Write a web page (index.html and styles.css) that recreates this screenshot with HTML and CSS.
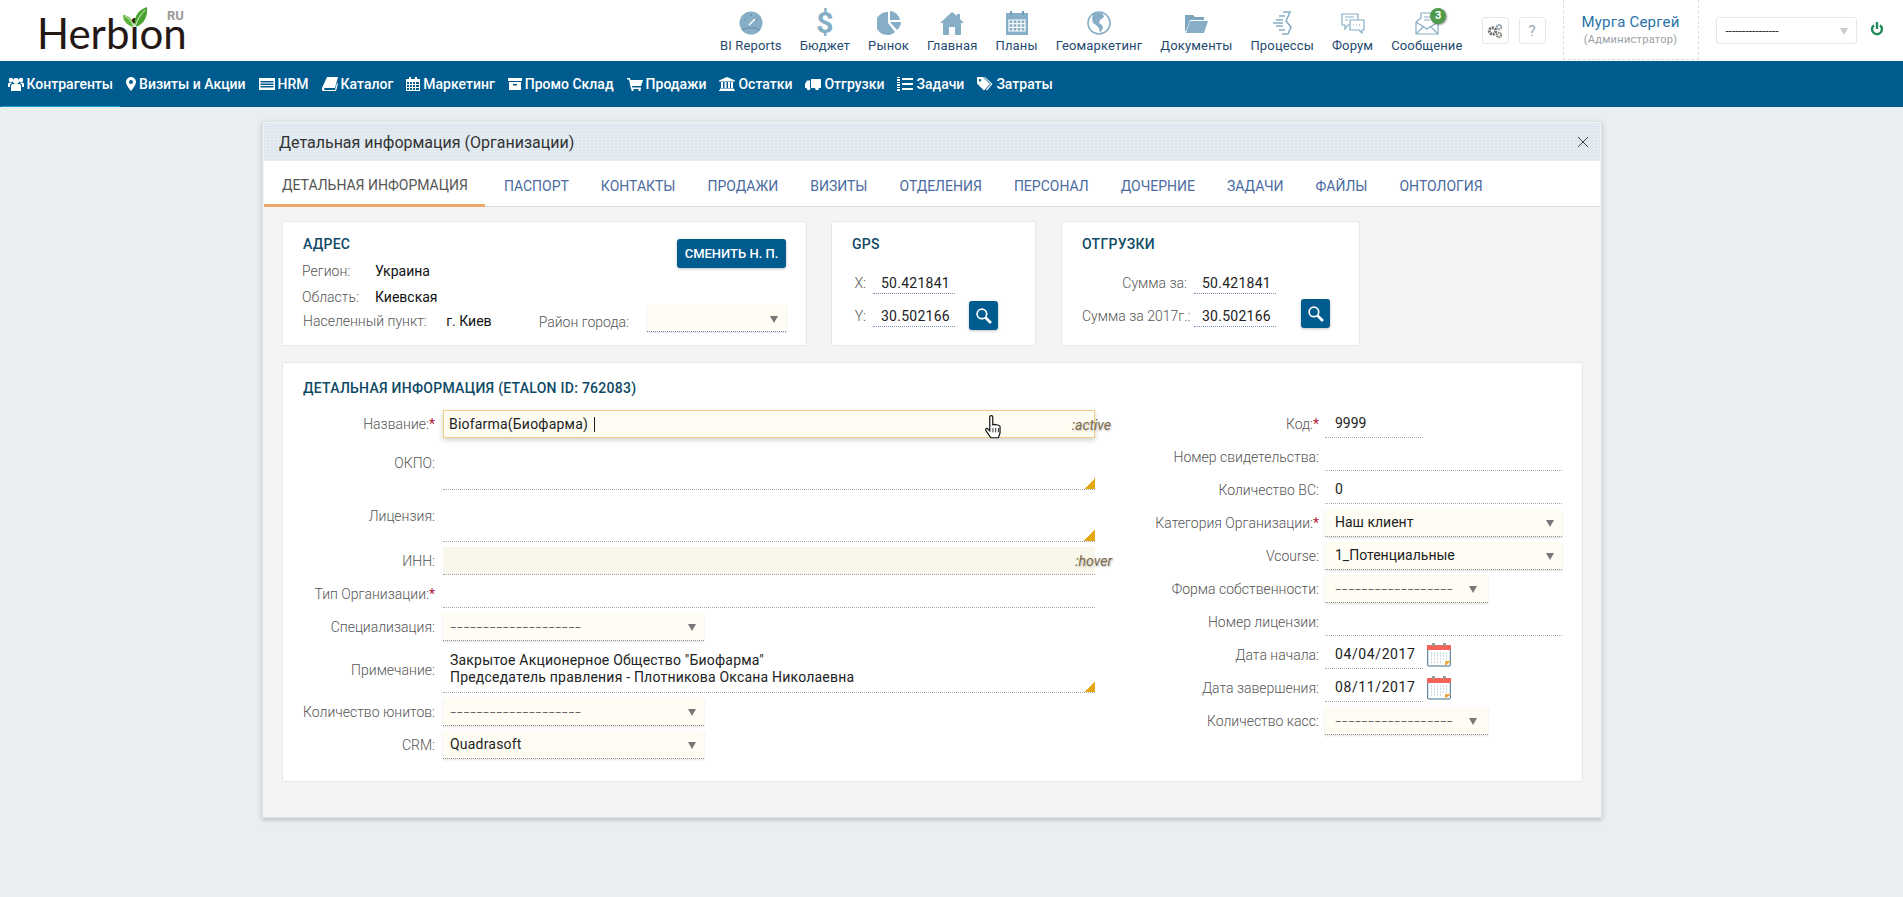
FILE: index.html
```html
<!DOCTYPE html>
<html lang="ru">
<head>
  <meta charset="UTF-8">
  <meta name="viewport" content="width=device-width, initial-scale=1.0">
  <title>Детальная информация (Организации)</title>
  <link rel="stylesheet" href="styles.css">
</head>
<body>
  <header class="topbar">
    <div class="logo">
      <span class="logo-text">Herbion</span>
      <span class="logo-ru">RU</span>
      <svg class="logo-leaf" viewBox="0 0 26 21"><path fill="#5db33c" d="M12 20C6 19 1 15 1 8c5 0 10 4 11 12z"/><path fill="#4ba32f" d="M13 20c-2-8 2-17 12-20 1 9-3 18-12 20z"/><path fill="none" stroke="#fff" stroke-width=".8" d="M13 20C15 13 18 8 23 3M12 20C10 15 7 11 3 9"/></svg>
    </div>
    <nav class="top-menu">
      <a class="top-item"><svg class="top-icon" viewBox="0 0 24 24"><circle cx="12" cy="12" r="11.5" fill="#86aec6"/><path fill="none" stroke="#5f8dab" stroke-width="1" d="M3 19c5-3 13-3 18 0M12 3v2M5 8l2 1M19 8l-2 1"/><path stroke="#fff" stroke-width="1.5" d="M10 14l6-6"/></svg>BI Reports</a>
      <a class="top-item"><span class="top-glyph">$</span>Бюджет</a>
      <a class="top-item"><svg class="top-icon" viewBox="0 0 24 24"><path fill="#86aec6" d="M11 1v11l7 9A11.5 11.5 0 1 1 11 1z"/><path fill="#86aec6" d="M13 0a11 11 0 0 1 10 9H13zM13 11h11a11 11 0 0 1-4 8z"/></svg>Рынок</a>
      <a class="top-item"><svg class="top-icon" viewBox="0 0 24 24"><path fill="#86aec6" d="M12 1L0 12h3v12h6v-8h6v8h6V12h3l-4-4V3h-3v2z"/></svg>Главная</a>
      <a class="top-item"><svg class="top-icon" viewBox="0 0 24 24"><rect x="1" y="2" width="22" height="22" fill="#86aec6"/><rect x="5" y="0" width="2" height="4" fill="#6f9ab5"/><rect x="17" y="0" width="2" height="4" fill="#6f9ab5"/><path fill="none" stroke="#fff" stroke-width="1.2" d="M4 9h16v11H4zM4 12.6h16M4 16.3h16M8 9v11M12 9v11M16 9v11"/></svg>Планы</a>
      <a class="top-item"><svg class="top-icon" viewBox="0 0 24 24"><circle cx="12" cy="12" r="11" fill="#fff" stroke="#86aec6" stroke-width="1.6"/><path fill="#86aec6" d="M6 3c3-2 8-2 10 0l1 3-4 3-1 3 3 2 1 3-3 5-1-5-3-3-3-2-1-4z"/></svg>Геомаркетинг</a>
      <a class="top-item"><svg class="top-icon" viewBox="0 0 24 24"><path fill="#7da7c1" d="M1 4h8l2 2h9v3H6L2 20H1z"/><path fill="#86aec6" d="M6 10h18l-4 12H2z"/></svg>Документы</a>
      <a class="top-item"><svg class="top-icon" viewBox="0 0 24 24"><path fill="none" stroke="#86aec6" stroke-width="1.6" d="M13 1h7l-4 9 5 6-3 7h-6M9 5h6M6 9h7M3 12h10M6 15h7M9 19h6"/></svg>Процессы</a>
      <a class="top-item"><svg class="top-icon" viewBox="0 0 24 24"><path fill="#fff" stroke="#86aec6" stroke-width="1.2" d="M1 3h16v11H7l-3 4v-4H1z"/><path fill="#fff" stroke="#86aec6" stroke-width="1.2" d="M9 9h14v10h-2v3l-3-3H9z"/><path stroke="#86aec6" d="M12 14h1M15 14h1M18 14h1M4 6h9M4 9h3"/></svg>Форум</a>
      <a class="top-item top-item-mail"><svg class="top-icon" viewBox="0 0 24 24"><path fill="#fff" stroke="#86aec6" stroke-width="1.2" d="M1 11l5-4V2h12v5l5 4v12H1z"/><path fill="none" stroke="#86aec6" stroke-width="1.2" d="M1 11l11 7 11-7M1 23l8-8M23 23l-8-8M9 6h6M9 9h6"/></svg><span class="mail-badge">3</span>Сообщение</a>
    </nav>
    <button class="tool-btn tool-gear"><svg viewBox="0 0 16 16" width="16" height="16"><circle cx="5.500" cy="8" r="3.200" fill="none" stroke="#747474" stroke-width="3" stroke-dasharray="2 .8"/><circle cx="12" cy="4" r="2.200" fill="none" stroke="#8a9aa8" stroke-width="2.200" stroke-dasharray="1.500 .6"/><circle cx="12" cy="12" r="2.200" fill="none" stroke="#8a8a7a" stroke-width="2.200" stroke-dasharray="1.500 .6"/></svg></button>
    <button class="tool-btn tool-help">?</button>
    <div class="user-box">
      <div class="user-name">Мурга Сергей</div>
      <div class="user-role">(Администратор)</div>
    </div>
    <div class="top-select">----------------<span class="arrow arrow-light"></span></div>
    <svg class="power" viewBox="0 0 14 14"><path fill="none" stroke="#1f8a5a" stroke-width="2.400" d="M4 3.200a5 5 0 1 0 6 0M7 0v7"/></svg>
  </header>

  <nav class="main-menu">
    <a class="menu-item active"><svg viewBox="0 0 16 14"><circle cx="8" cy="4" r="3"/><circle cx="3" cy="3" r="2.200"/><circle cx="13" cy="3" r="2.200"/><path d="M3 14V9a2 2 0 0 1 2-2h6a2 2 0 0 1 2 2v5zM0 10V7a1.500 1.500 0 0 1 1.500-1.500H4L2 8v2zM16 10V7a1.500 1.500 0 0 0-1.500-1.500H12L14 8v2z"/></svg>Контрагенты</a>
    <a class="menu-item"><svg viewBox="0 0 10 14"><path fill-rule="evenodd" d="M5 0a5 5 0 0 1 5 5c0 3-5 9-5 9S0 8 0 5a5 5 0 0 1 5-5zm0 3a2 2 0 1 0 0 4 2 2 0 0 0 0-4z"/></svg>Визиты и Акции</a>
    <a class="menu-item"><svg viewBox="0 0 16 14"><path fill-rule="evenodd" d="M0 1h16v12H0zM1.500 4v1.500h13V4zm0 2.500V8h13V6.500zm0 2.500v1.500h13V9z"/></svg>HRM</a>
    <a class="menu-item"><svg viewBox="0 0 16 14"><path d="M5 0h11l-3 11H3a1 1 0 0 0 0 2h10l2-7 1 1-2 7H2a2 2 0 0 1-2-3z"/></svg>Каталог</a>
    <a class="menu-item"><svg viewBox="0 0 14 14"><path fill-rule="evenodd" d="M0 2h3V0h2v2h4V0h2v2h3v12H0zM1 5v2h2V5zm3 0v2h2V5zm3 0v2h2V5zm3 0v2h3V5zM1 8v2h2V8zm3 0v2h2V8zm3 0v2h2V8zm3 0v2h3V8zM1 11v2h2v-2zm3 0v2h2v-2zm3 0v2h2v-2zm3 0v2h3v-2z"/></svg>Маркетинг</a>
    <a class="menu-item"><svg viewBox="0 0 14 14"><path fill-rule="evenodd" d="M0 1h14v3H0zM1 5h12v8H1zm4 2v1.500h4V7z"/></svg>Промо Склад</a>
    <a class="menu-item"><svg viewBox="0 0 16 14"><path d="M0 1h3l.5 2H16l-2 6H5l.3 1.500H14V12H4L2 2.500H0z"/><circle cx="5.500" cy="13" r="1.200"/><circle cx="12.500" cy="13" r="1.200"/></svg>Продажи</a>
    <a class="menu-item"><svg viewBox="0 0 16 14"><path d="M8 0l8 3.500v1H0v-1zM2 5h2v6H2zM5.500 5h2v6h-2zM9 5h2v6H9zM12 5h2v6h-2zM1 11.500h14V13H1zM0 13h16v1H0z"/></svg>Остатки</a>
    <a class="menu-item"><svg viewBox="0 0 16 14"><path d="M6 2h10v9H6zM0 7l2-3.500h3V11H0z"/><circle cx="3.500" cy="11.500" r="1.800"/><circle cx="12" cy="11.500" r="1.800"/></svg>Отгрузки</a>
    <a class="menu-item"><svg viewBox="0 0 16 14"><path d="M5 1h11v2H5zM5 6h11v2H5zM5 11h11v2H5zM0 0h3v1H0zM0 2h3v2H0zM0 5h3v1H0zM0 7h3v2H0zM0 10h3v1H0zM0 12h3v2H0z"/></svg>Задачи</a>
    <a class="menu-item"><svg viewBox="0 0 16 14"><path fill-rule="evenodd" d="M0 0h6l7 7-6 6.500-7-7zm3 2a1.200 1.200 0 1 0 0 2.400A1.200 1.200 0 0 0 3 2z"/><path d="M8 0l7.500 7-5.500 6.500-1-1L14 7 7 0z"/></svg>Затраты</a>
  </nav>

  <main class="modal">
    <div class="modal-title">
      <span>Детальная информация (Организации)</span>
      <svg class="modal-close" viewBox="0 0 12 12"><path fill="none" stroke="#444" d="M1 1l10 10M11 1L1 11"/></svg>
    </div>
    <div class="tabs">
      <a class="tab active">Детальная информация</a>
      <a class="tab">Паспорт</a>
      <a class="tab">Контакты</a>
      <a class="tab">Продажи</a>
      <a class="tab">Визиты</a>
      <a class="tab">Отделения</a>
      <a class="tab">Персонал</a>
      <a class="tab">Дочерние</a>
      <a class="tab">Задачи</a>
      <a class="tab">Файлы</a>
      <a class="tab">Онтология</a>
    </div>

    <div class="modal-body">
      <div class="card-row">
        <section class="card card-address">
          <div class="address-top">
            <div>
              <h3 class="card-title">Адрес</h3>
              <div class="info-row first"><span class="info-label">Регион:</span><span class="info-value">Украина</span></div>
              <div class="info-row"><span class="info-label">Область:</span><span class="info-value">Киевская</span></div>
            </div>
            <button class="btn">Сменить н. п.</button>
          </div>
          <div class="address-bottom">
            <span class="city-label">Населенный пункт:</span>
            <span class="city-value">г. Киев</span>
            <span class="district-label">Район города:</span>
            <div class="select district-select"><span class="arrow"></span></div>
          </div>
        </section>

        <section class="card card-gps">
          <h3 class="card-title">GPS</h3>
          <div class="coords">
            <div class="coord-rows">
              <div class="coord-row"><span class="coord-label">X:</span><span class="coord-value">50.421841</span></div>
              <div class="coord-row"><span class="coord-label">Y:</span><span class="coord-value">30.502166</span></div>
            </div>
            <button class="search-btn"><svg viewBox="0 0 16 16" width="17" height="17"><circle cx="6.500" cy="6.500" r="4.500" fill="none" stroke="#fff" stroke-width="1.600"/><path stroke="#fff" stroke-width="2.600" d="M10 10l5 5"/></svg></button>
          </div>
        </section>

        <section class="card card-ship">
          <h3 class="card-title">Отгрузки</h3>
          <div class="coords">
            <div class="coord-rows">
              <div class="coord-row"><span class="coord-label ship-label">Сумма за:</span><span class="coord-value">50.421841</span></div>
              <div class="coord-row"><span class="coord-label ship-label">Сумма за 2017г.:</span><span class="coord-value">30.502166</span></div>
            </div>
            <button class="search-btn ship-search"><svg viewBox="0 0 16 16" width="17" height="17"><circle cx="6.500" cy="6.500" r="4.500" fill="none" stroke="#fff" stroke-width="1.600"/><path stroke="#fff" stroke-width="2.600" d="M10 10l5 5"/></svg></button>
          </div>
        </section>
      </div>

      <section class="card card-details">
        <h3 class="card-title">Детальная информация (Etalon ID: 762083)</h3>
        <div class="form-cols">
          <div class="form-col form-left">
            <div class="field-row"><label>Название:<b>*</b></label>
              <div class="field field-active">Biofarma(Биофарма) <i class="caret"></i><em class="state-hint">:active</em>
                <svg class="hand" viewBox="0 0 16 24"><path fill="#fff" stroke="#111" stroke-width="1.100" d="M5 2a1.400 1.400 0 0 1 2.800 0v7l1.700-.4 1.800.4 1.700.5 1.500 1v6l-1.500 4.500H6L1.500 14.500c-1-2 .8-2.800 2-1.500L5 14.500z"/><path stroke="#111" stroke-width=".8" d="M8 12v4M10.500 12v4M13 12v4"/></svg>
              </div>
            </div>
            <div class="field-row row-tall"><label class="label-top">ОКПО:</label><div class="field note-field"></div></div>
            <div class="field-row row-tall"><label class="label-top label-low">Лицензия:</label><div class="field note-field"></div></div>
            <div class="field-row"><label>ИНН:</label><div class="field field-hover"><em class="state-hint">:hover</em></div></div>
            <div class="field-row"><label>Тип Организации:<b>*</b></label><div class="field"></div></div>
            <div class="field-row"><label>Специализация:</label><div class="select select-left"><span class="dashes">––––––––––––––––––––</span><span class="arrow"></span></div></div>
            <div class="field-row row-tall"><label>Примечание:</label><div class="field note-field note-text">Закрытое Акционерное Общество "Биофарма"<br>Председатель правления - Плотникова Оксана Николаевна</div></div>
            <div class="field-row"><label>Количество юнитов:</label><div class="select select-left"><span class="dashes">––––––––––––––––––––</span><span class="arrow"></span></div></div>
            <div class="field-row"><label>CRM:</label><div class="select select-left">Quadrasoft<span class="arrow"></span></div></div>
          </div>

          <div class="form-col form-right">
            <div class="field-row"><label>Код:<b>*</b></label><div class="field field-short">9999</div></div>
            <div class="field-row"><label>Номер свидетельства:</label><div class="field"></div></div>
            <div class="field-row"><label>Количество ВС:</label><div class="field">0</div></div>
            <div class="field-row"><label>Категория Организации:<b>*</b></label><div class="select">Наш клиент<span class="arrow"></span></div></div>
            <div class="field-row"><label>Vcourse:</label><div class="select">1_Потенциальные<span class="arrow"></span></div></div>
            <div class="field-row"><label>Форма собственности:</label><div class="select select-mid"><span class="dashes">––––––––––––––––––</span><span class="arrow"></span></div></div>
            <div class="field-row"><label>Номер лицензии:</label><div class="field"></div></div>
            <div class="field-row"><label>Дата начала:</label><div class="field field-short field-date">04/04/2017</div>
              <svg class="calendar" viewBox="0 0 24 24"><rect x=".7" y="3" width="22.600" height="20" rx="1" fill="#fff" stroke="#3d6c8c"/><rect y="2" width="24" height="5" fill="#f4635a"/><path fill="#9a9a8f" d="M5 0h3v3H5zM16 0h3v3h-3z"/><path stroke="#9bb2c2" stroke-dasharray="1 2" d="M4 10h16M4 13h16M4 16h16M4 19h12"/><path fill="#f0a63c" d="M18 23v-5h6z"/></svg>
            </div>
            <div class="field-row"><label>Дата завершения:</label><div class="field field-short field-date">08/11/2017</div>
              <svg class="calendar" viewBox="0 0 24 24"><rect x=".7" y="3" width="22.600" height="20" rx="1" fill="#fff" stroke="#3d6c8c"/><rect y="2" width="24" height="5" fill="#f4635a"/><path fill="#9a9a8f" d="M5 0h3v3H5zM16 0h3v3h-3z"/><path stroke="#9bb2c2" stroke-dasharray="1 2" d="M4 10h16M4 13h16M4 16h16M4 19h12"/><path fill="#f0a63c" d="M18 23v-5h6z"/></svg>
            </div>
            <div class="field-row"><label>Количество касс:</label><div class="select select-mid"><span class="dashes">––––––––––––––––––</span><span class="arrow"></span></div></div>
          </div>
        </div>
      </section>
    </div>
  </main>
</body>
</html>
```

FILE: styles.css
```css
* {
  box-sizing: border-box;
}
body {
  margin: 0;
  min-height: 100vh;
  background: #e9eef1;
  font-family: Roboto, "Liberation Sans", sans-serif;
  font-size: 14px;
  color: #222;
}

/* top bar */
.topbar {
  height: 61px;
  background: #fff;
  display: flex;
  align-items: flex-start;
}
.logo {
  position: relative;
  width: 702px;
  height: 61px;
  flex: none;
}
.logo-text {
  position: absolute;
  left: 37px;
  top: 19px;
  font-family: Lato, sans-serif;
  font-weight: 400;
  font-size: 42px;
  line-height: 28px;
  color: #231815;
}
.logo-ru {
  position: absolute;
  left: 167px;
  top: 12px;
  font-size: 13px;
  font-weight: 700;
  line-height: 8px;
  color: #9a9a9a;
}
.logo-leaf {
  position: absolute;
  left: 122px;
  top: 7px;
  width: 26px;
  height: 21px;
}
.top-menu {
  display: flex;
  gap: 18px;
  margin-left: 18px;
}
.top-item {
  position: relative;
  display: flex;
  flex-direction: column;
  align-items: center;
  padding-top: 11px;
  font-size: 13px;
  letter-spacing: 0.15px;
  line-height: 16px;
  color: #1f4a70;
}
.top-icon {
  width: 24px;
  height: 24px;
  margin-bottom: 3px;
}
.top-glyph {
  height: 24px;
  margin-bottom: 3px;
  font-size: 30px;
  line-height: 24px;
  font-weight: 700;
  color: #86aec6;
}
.mail-badge {
  position: absolute;
  left: 39px;
  top: 8px;
  width: 16px;
  height: 16px;
  border-radius: 50%;
  background: #4f9a4c;
  box-shadow: 1px 1px 2px rgba(0, 0, 0, 0.4);
  color: #fff;
  font-size: 11px;
  font-weight: 700;
  letter-spacing: 0;
  line-height: 16px;
  text-align: center;
}
.tool-btn {
  width: 27px;
  height: 27px;
  margin: 17px 0 0 19px;
  padding: 0;
  flex: none;
  background: #fff;
  border: 1px solid #e6e6e6;
  border-radius: 3px;
  display: flex;
  align-items: center;
  justify-content: center;
}
.tool-help {
  margin-left: 10px;
  color: #9aa5ad;
  font-family: Roboto, sans-serif;
  font-size: 15px;
}
.user-box {
  width: 136px;
  height: 60px;
  margin-left: 17px;
  flex: none;
  border: 1px dashed #dedede;
  border-top: none;
  text-align: center;
  padding-top: 13px;
}
.user-name {
  font-size: 15px;
  letter-spacing: 0.2px;
  line-height: 18px;
  color: #2a72a8;
}
.user-role {
  font-size: 11px;
  letter-spacing: 0.3px;
  line-height: 16px;
  margin-top: 1px;
  color: #9a9fa8;
}
.top-select {
  position: relative;
  width: 141px;
  height: 27px;
  margin: 17px 0 0 17px;
  flex: none;
  border: 1px solid #e6e6e6;
  border-radius: 3px;
  padding-left: 9px;
  font-size: 12px;
  line-height: 26px;
  color: #333;
}
.power {
  width: 14px;
  height: 14px;
  margin: 22px 0 0 13px;
  flex: none;
}

/* blue menu */
.main-menu {
  height: 46px;
  background: #005b8f;
  display: flex;
  padding-left: 1px;
}
.menu-item {
  display: flex;
  align-items: center;
  gap: 3px;
  height: 46px;
  padding: 0 6.5px;
  color: #fff;
  font-size: 14px;
  font-weight: 500;
}
.menu-item svg {
  height: 14px;
  width: auto;
  fill: #fff;
  flex: none;
}
.menu-item.active {
  border-bottom: 1px solid #1b9ad6;
}

/* modal */
.modal {
  width: 1340px;
  margin: 14px 0 0 262px;
  padding: 1px;
  background: #f2f4f6;
  border: 1px solid #dde2e5;
  box-shadow: 0 2px 5px rgba(0, 0, 0, 0.2);
}
.modal-title {
  height: 38px;
  padding: 0 11px 0 15px;
  display: flex;
  align-items: center;
  justify-content: space-between;
  font-size: 16px;
  color: #333;
  background-color: #dfe8ef;
  background-image: radial-gradient(rgba(255, 255, 255, 0.35) 0.6px, transparent 0.7px);
  background-size: 4px 3px;
}
.modal-close {
  width: 12px;
  height: 12px;
}
.tabs {
  height: 46px;
  background: #fff;
  border-bottom: 1px solid #dcdfe2;
  display: flex;
}
.tab {
  padding: 16px 16px 0;
  font-size: 14px;
  line-height: 18px;
  text-transform: uppercase;
  color: #4a6ba0;
}
.tab.active {
  height: 46px;
  padding: 15px 17px 0 18px;
  margin-right: 3px;
  border-bottom: 3px solid #eba868;
  color: #555;
}
.modal-body {
  padding: 14px 18px 34px;
}
.card-row {
  display: flex;
  gap: 24px;
  margin-bottom: 16px;
}
.card {
  background: #fff;
  border: 1px solid #e6e8ea;
  border-radius: 2px;
  padding: 14px 20px 15px;
}
.card-title {
  margin: 0;
  font-size: 14px;
  line-height: 16px;
  font-weight: 500;
  letter-spacing: 0.27px;
  text-transform: uppercase;
  color: #0e4a66;
}

/* address */
.card-address {
  width: 525px;
  height: 125px;
  padding-right: 20px;
}
.address-top {
  display: flex;
  justify-content: space-between;
  align-items: flex-start;
  height: 69px;
}
.info-row {
  display: flex;
  line-height: 16px;
  margin-top: 10px;
}
.info-row.first {
  margin-top: 11px;
}
.info-label {
  width: 72px;
  margin-left: -1px;
  margin-right: 1px;
  color: #555;
  font-weight: 300;
}
.info-value,
.city-value {
  color: #111;
}
.btn {
  height: 29px;
  width: 109px;
  margin-top: 3px;
  padding: 0;
  border: none;
  border-radius: 3px;
  background: #005b8f;
  box-shadow: 0 1px 3px rgba(0, 0, 0, 0.25);
  color: #fff;
  font-family: Roboto, sans-serif;
  font-size: 13px;
  font-weight: 500;
  text-transform: uppercase;
}
.address-bottom {
  display: flex;
  align-items: flex-start;
  line-height: 16px;
}
.city-label {
  width: 144px;
  margin-top: 8px;
  color: #555;
  font-weight: 300;
}
.city-value {
  width: 93px;
  margin-top: 8px;
}
.district-label {
  width: 109px;
  margin-top: 9px;
  color: #555;
  font-weight: 300;
}
.district-select {
  width: 139px;
}

/* coordinates */
.card-gps {
  width: 205px;
  height: 125px;
}
.card-ship {
  width: 299px;
  height: 125px;
  margin-left: 1px;
}
.coords {
  display: flex;
  align-items: flex-end;
  margin-top: 15px;
}
.coord-rows {
  display: flex;
  flex-direction: column;
  gap: 6px;
  margin-bottom: 3px;
}
.coord-row {
  display: flex;
  align-items: flex-start;
  gap: 7px;
}
.coord-label {
  width: 14px;
  margin-top: 8px;
  line-height: 16px;
  text-align: right;
  color: #555;
  font-weight: 300;
}
.ship-label {
  width: 105px;
  white-space: nowrap;
}
.coord-value {
  width: 82px;
  height: 27px;
  padding: 8px 0 0 8px;
  line-height: 16px;
  letter-spacing: 0.25px;
  border-bottom: 1px dotted #7a93b4;
  color: #222;
}
.search-btn {
  width: 29px;
  height: 29px;
  margin-left: 14px;
  padding: 0;
  border: none;
  border-radius: 3px;
  background: #005b8f;
  box-shadow: 0 1px 3px rgba(0, 0, 0, 0.25);
  display: flex;
  align-items: center;
  justify-content: center;
}
.ship-search {
  margin-left: 25px;
  margin-bottom: 2px;
}

/* form */
.card-details {
  padding: 17px 20px 22px 20px;
  width: 1301px;
}
.form-cols {
  display: flex;
  margin-top: 14px;
}
.form-col {
  display: flex;
  flex-direction: column;
  gap: 5px;
}
.form-left {
  width: 792px;
}
.form-right {
  width: 467px;
}
.field-row {
  display: flex;
  align-items: center;
  height: 28px;
}
.row-tall {
  height: 47px;
}
.field-row label {
  width: 132px;
  margin-right: 8px;
  flex: none;
  text-align: right;
  line-height: 16px;
  color: #555;
  font-weight: 300;
  white-space: nowrap;
}
.form-right .field-row label {
  width: 224px;
  margin-right: 6px;
}
.field-row label b {
  color: #b3223c;
  font-weight: 400;
}
.field-row .label-top {
  align-self: flex-start;
  margin-top: 12px;
}
.field-row .label-low {
  margin-top: 13px;
}
.field {
  position: relative;
  flex: 1;
  height: 100%;
  padding: 5px 10px 0;
  line-height: 16px;
  border-bottom: 1px dotted #a8a8a8;
  color: #222;
}
.form-left .field {
  padding-left: 7px;
  letter-spacing: 0.2px;
}
.field-short {
  flex: none;
  width: 98px;
}
.field-date {
  letter-spacing: 0.6px;
}
.note-field::after {
  content: "";
  position: absolute;
  right: 0;
  bottom: 0;
  width: 11px;
  height: 11px;
  background: linear-gradient(135deg, transparent 50%, #e5a812 50%);
}
.form-left .note-text {
  line-height: 17px;
  padding-top: 6px;
}
.field-active {
  background: #fffdf3;
  border: 1px solid #f0d184;
  box-shadow: 0 2px 5px rgba(0, 0, 0, 0.2);
}
.form-left .field-active {
  padding-left: 5px;
}
.field-hover {
  background: #f9f6ec;
}
.caret {
  display: inline-block;
  width: 1px;
  height: 15px;
  margin-left: 2px;
  vertical-align: -3px;
  background: #222;
}
.state-hint {
  position: absolute;
  right: -17px;
  top: 6px;
  font-size: 14px;
  color: #7a6a4a;
  letter-spacing: 0;
  text-shadow: 1px 1px 2px rgba(0, 0, 0, 0.25);
}
.hand {
  position: absolute;
  left: 540px;
  top: 4px;
  width: 18px;
  height: 26px;
}
.select {
  position: relative;
  flex: 1;
  height: 100%;
  padding: 5px 10px 0;
  line-height: 16px;
  background: #fffdf3;
  border-bottom: 1px dotted #8f8f8f;
  box-shadow: 0 1px 2px rgba(0, 0, 0, 0.12);
  color: #222;
}
.select-left {
  flex: none;
  width: 261px;
  padding-left: 7px;
  letter-spacing: 0.2px;
}
.select-mid {
  flex: none;
  width: 163px;
}
.dashes {
  font-size: 10px;
  letter-spacing: 0;
  color: #555;
}
.district-select {
  flex: none;
  height: 27px;
  border-bottom-color: #6f7fb0;
}
.arrow {
  position: absolute;
  right: 8px;
  top: 11px;
  border-style: solid;
  border-width: 7px 4px 0;
  border-color: #777 transparent transparent;
}
.select-mid .arrow {
  right: 11px;
}
.arrow-light {
  top: 10px;
  border-color: #ccc transparent transparent;
}
.calendar {
  width: 24px;
  height: 24px;
  margin-left: 4px;
  flex: none;
}
```
